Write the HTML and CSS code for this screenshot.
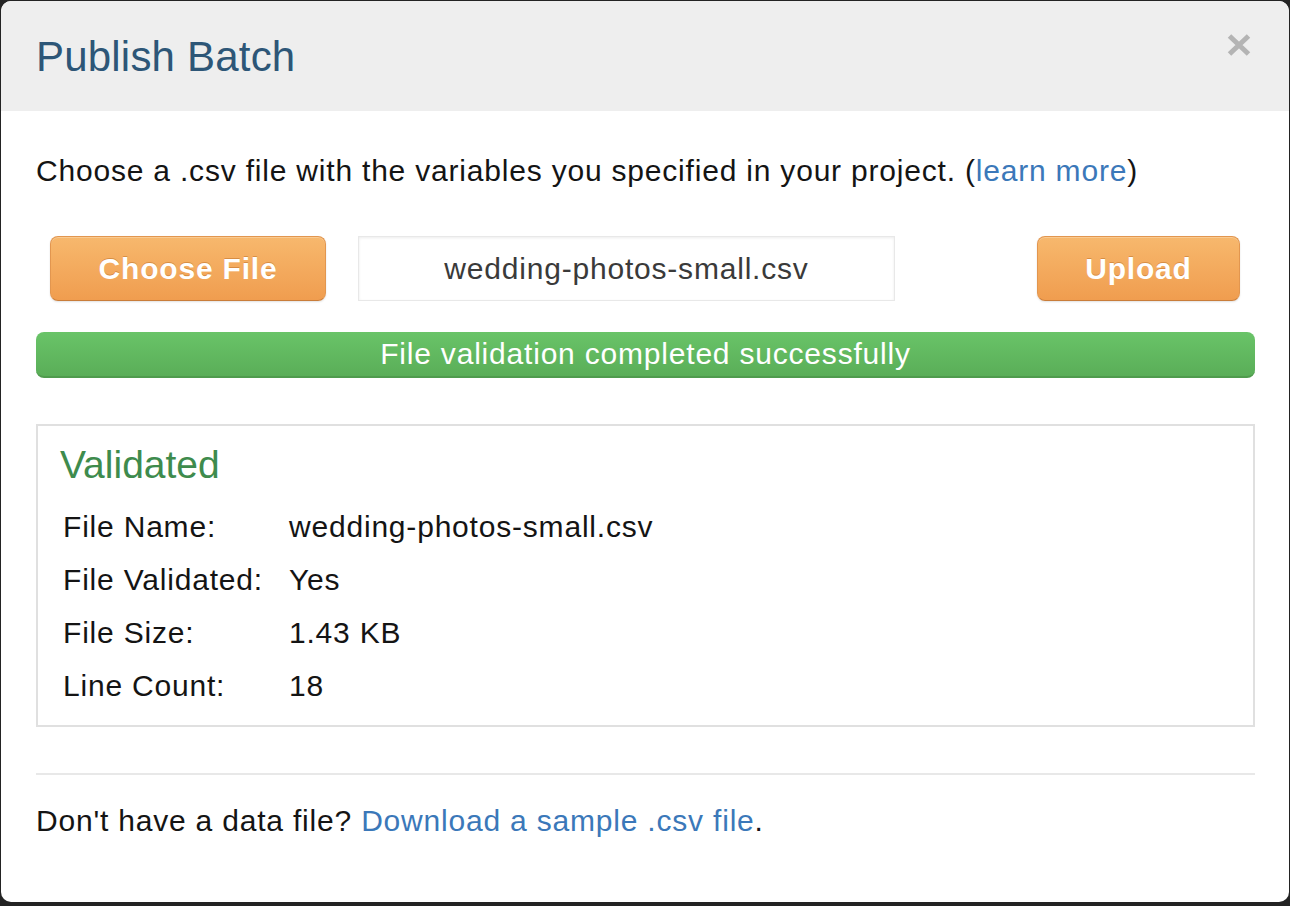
FILE: index.html
```html
<!DOCTYPE html>
<html lang="en">
<head>
<meta charset="utf-8">
<title>Publish Batch</title>
<link rel="stylesheet" href="styles.css">
</head>
<body>
<div class="modal">
  <div class="modal-header">
    <h3 class="modal-title">Publish Batch</h3>
    <button class="close" aria-label="Close">
      <svg width="24" height="22" viewBox="0 0 24 22"><path d="M2.5 2 L21.5 20 M21.5 2 L2.5 20" stroke="#b4b4b4" stroke-width="5" fill="none"/></svg>
    </button>
  </div>
  <div class="modal-body">
    <p class="intro">Choose a .csv file with the variables you specified in your project. (<a href="#" class="link">learn more</a>)</p>
    <div class="file-row">
      <button class="btn-orange btn-choose">Choose File</button>
      <div class="file-name">wedding-photos-small.csv</div>
      <button class="btn-orange btn-upload">Upload</button>
    </div>
    <div class="progress">File validation completed successfully</div>
    <div class="result">
      <h4 class="result-title">Validated</h4>
      <div class="result-grid">
        <div class="label">File Name:</div><div class="value">wedding-photos-small.csv</div>
        <div class="label">File Validated:</div><div class="value">Yes</div>
        <div class="label">File Size:</div><div class="value">1.43 KB</div>
        <div class="label">Line Count:</div><div class="value">18</div>
      </div>
    </div>
    <hr class="divider">
    <p class="footer-text">Don't have a data file? <a href="#" class="link">Download a sample .csv file</a>.</p>
  </div>
</div>
</body>
</html>
```
FILE: styles.css
```css
html, body {
  margin: 0;
  padding: 0;
  background: #232323;
  height: 906px;
  overflow: hidden;
}
body {
  font-family: "Liberation Sans", Arial, sans-serif;
  color: #141414;
  padding-top: 1px;
  padding-left: 1px;
}
.modal {
  width: 1288px;
  height: 901px;
  background: #fff;
  border-radius: 10px;
  overflow: hidden;
  box-sizing: border-box;
}
.modal-header {
  height: 110px;
  background: #eeeeee;
  display: flex;
  align-items: center;
  justify-content: space-between;
  padding: 0 38px 0 35px;
}
.modal-title {
  margin: 0;
  font-size: 42px;
  letter-spacing: 0.2px;
  font-weight: normal;
  color: #2d5677;
  line-height: 48px;
  padding-top: 1px;
}
.close {
  border: 0;
  background: none;
  padding: 0;
  margin-top: -22px;
  display: flex;
}
.modal-body {
  padding: 40px 34px 0 35px;
  font-size: 30px;
  letter-spacing: 0.8px;
}
.intro, .footer-text {
  margin: 0;
  line-height: 40px;
}
.link {
  color: #3b78b9;
  text-decoration: none;
}
.file-row {
  display: flex;
  align-items: stretch;
  height: 65px;
  margin-top: 45px;
  padding: 0 15px 0 14px;
}
.btn-orange {
  font-family: "Liberation Sans", Arial, sans-serif;
  font-size: 30px;
  letter-spacing: 0.8px;
  font-weight: bold;
  color: #fff;
  text-shadow: 0 -1px 0 rgba(160, 80, 10, 0.35);
  background: linear-gradient(#f7b86d, #f09d4f);
  border: 1px solid #e2964f;
  border-bottom-color: #c97d3a;
  border-radius: 8px;
  box-shadow: 0 1px 2px rgba(0, 0, 0, 0.12), inset 0 1px 0 rgba(255, 255, 255, 0.25);
  padding: 0;
}
.btn-choose {
  width: 276px;
}
.btn-upload {
  width: 203px;
  margin-left: auto;
}
.file-name {
  margin-left: 32px;
  width: 537px;
  box-sizing: border-box;
  border: 1px solid #e8e8e8;
  box-shadow: inset 0 1px 3px rgba(0, 0, 0, 0.08);
  display: flex;
  align-items: center;
  justify-content: center;
  color: #3a3a3a;
}
.progress {
  margin-top: 31px;
  height: 46px;
  box-sizing: border-box;
  border-radius: 8px;
  background: linear-gradient(#69c468, #5aae58);
  border-bottom: 2px solid #4f9b4d;
  color: #fff;
  text-align: center;
  line-height: 44px;
}
.result {
  margin-top: 46px;
  border: 2px solid #e0e0e0;
  padding: 17px 22px 13px 22px;
}
.result-title {
  margin: 0;
  font-size: 39px;
  font-weight: normal;
  letter-spacing: 0;
  color: #3e8b4d;
  line-height: 44px;
}
.result-grid {
  display: grid;
  grid-template-columns: 226px 1fr;
  grid-auto-rows: 53px;
  align-items: center;
  margin-top: 13px;
  padding-left: 3px;
  line-height: 53px;
}
.divider {
  border: 0;
  border-top: 2px solid #e8e8e8;
  margin: 46px 0 0 0;
}
.footer-text {
  margin-top: 26px;
}
```
